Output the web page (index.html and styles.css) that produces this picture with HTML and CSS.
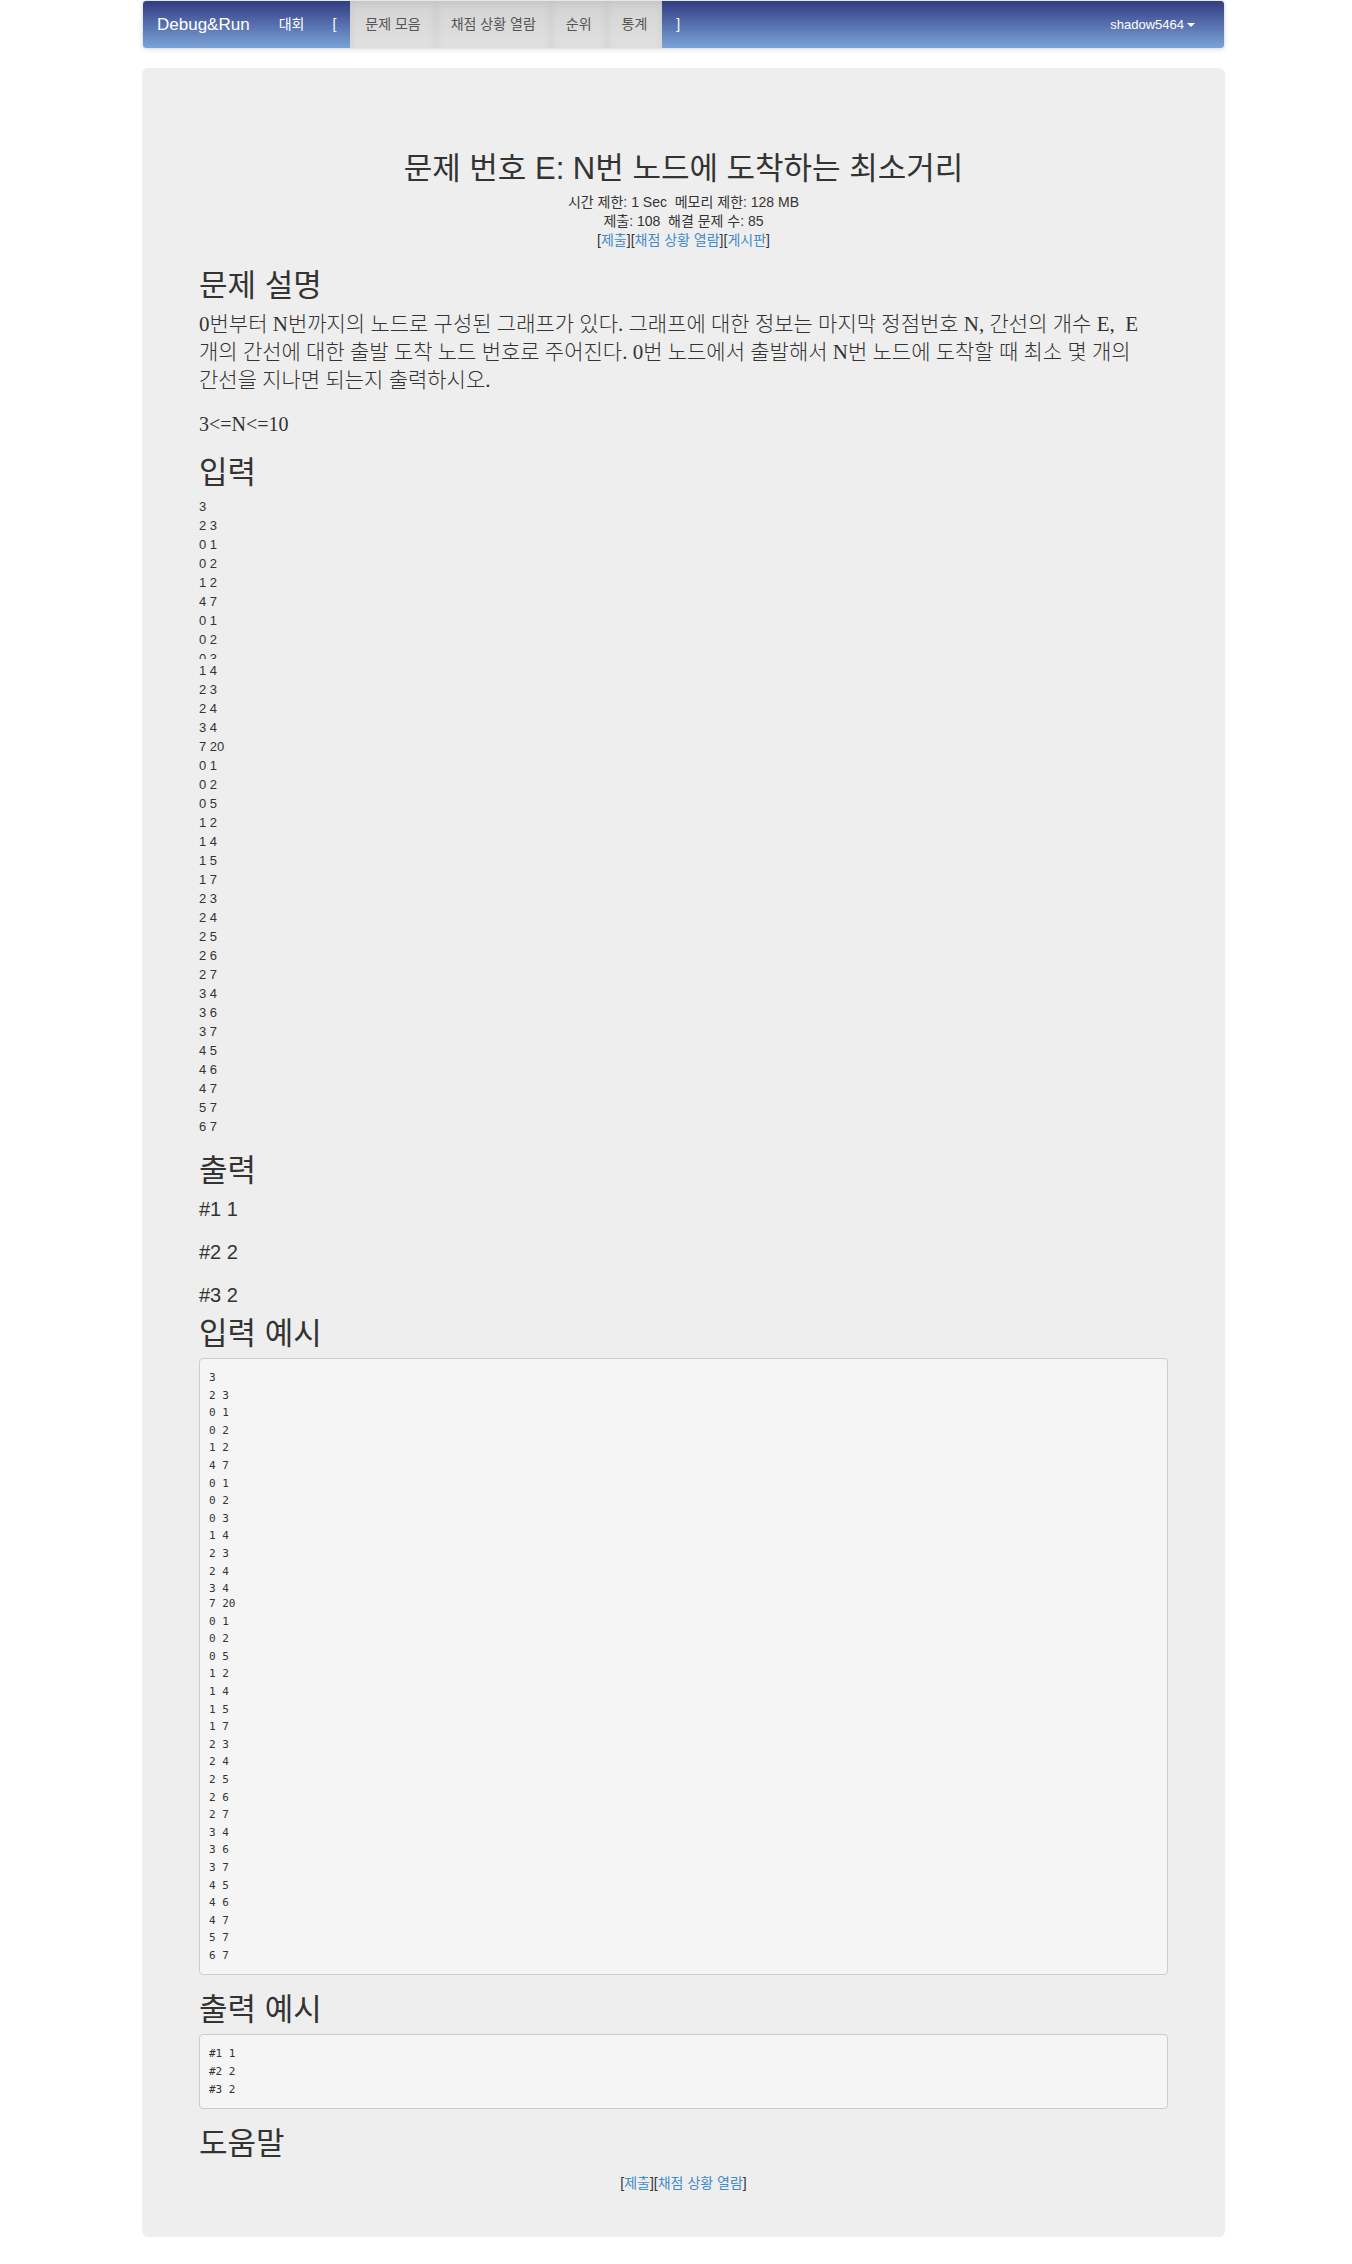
FILE: index.html
```
<!DOCTYPE html>
<html lang="ko">
<head>
<meta charset="utf-8">
<title>문제 번호 E: N번 노드에 도착하는 최소거리</title>
<link rel="stylesheet" href="styles.css">
</head>
<body>
<div class="container">
<nav class="navbar">
<a class="brand" href="#">Debug&amp;Run</a>
<ul class="menu">
<li><a href="#">대회</a></li>
<li><a href="#">[</a></li>
<li class="active"><a href="#">문제 모음</a></li>
<li class="active"><a href="#">채점 상황 열람</a></li>
<li class="active"><a href="#">순위</a></li>
<li class="active"><a href="#">통계</a></li>
<li><a href="#">]</a></li>
</ul>
<button class="user" type="button">shadow5464<span class="caret"></span></button>
</nav>
<main class="problem">
<header class="problem-head">
<h2 class="title">문제 번호 E: N번 노드에 도착하는 최소거리</h2>
<div>시간 제한: 1 Sec&nbsp; 메모리 제한: 128 MB</div>
<div>제출: 108&nbsp; 해결 문제 수: 85</div>
<div>[<a href="#">제출</a>][<a href="#">채점 상황 열람</a>][<a href="#">게시판</a>]</div>
</header>
<section>
<h2>문제 설명</h2>
<div class="description">
<p class="statement">0번부터 N번까지의 노드로 구성된 그래프가 있다. 그래프에 대한 정보는 마지막 정점번호 N, 간선의 개수 E,&nbsp; E<br>개의 간선에 대한 출발 도착 노드 번호로 주어진다. 0번 노드에서 출발해서 N번 노드에 도착할 때 최소 몇 개의<br>간선을 지나면 되는지 출력하시오.</p>
<p>3&lt;=N&lt;=10</p>
</div>
</section>
<section>
<h2>입력</h2>
<div class="lines lines-first">3
2 3
0 1
0 2
1 2
4 7
0 1
0 2
0 3</div>
<div class="lines">1 4
2 3
2 4
3 4
7 20
0 1
0 2
0 5
1 2
1 4
1 5
1 7
2 3
2 4
2 5
2 6
2 7
3 4
3 6
3 7
4 5
4 6
4 7
5 7
6 7</div>
</section>
<section>
<h2>출력</h2>
<div class="answers">
<p>#1 1</p>
<p>#2 2</p>
<p>#3 2</p>
</div>
</section>
<section>
<h2 class="sample-title">입력 예시</h2>
<div class="sample">
<pre class="sample-first">3
2 3
0 1
0 2
1 2
4 7
0 1
0 2
0 3
1 4
2 3
2 4
3 4</pre>
<pre>7 20
0 1
0 2
0 5
1 2
1 4
1 5
1 7
2 3
2 4
2 5
2 6
2 7
3 4
3 6
3 7
4 5
4 6
4 7
5 7
6 7</pre>
</div>
</section>
<section>
<h2>출력 예시</h2>
<div class="sample">
<pre>#1 1
#2 2
#3 2</pre>
</div>
</section>
<section>
<h2>도움말</h2>
</section>
<footer class="problem-foot">[<a href="#">제출</a>][<a href="#">채점 상황 열람</a>]</footer>
</main>
</div>
</body>
</html>
```
FILE: styles.css
```
* { box-sizing: border-box; }

body {
  margin: 0;
  background: #fff;
  color: #333;
  font: 13px/19px "Liberation Sans", "Noto Sans CJK KR", sans-serif;
}

a { color: #428bca; text-decoration: none; }
p, pre { margin: 0; }

.container { margin: 0 127px 27px 142px; }

/* Top bar */
.navbar {
  display: flex;
  height: 49px;
  margin-bottom: 19px;
  border: 1px solid #e7e7e7;
  border-radius: 4px;
  background: linear-gradient(#323c82, #7ba3d8);
  box-shadow: 0 1px 5px rgba(0, 0, 0, .1);
}
.brand {
  padding: 14px 15px 14px 14px;
  color: #fff;
  font-size: 17px;
}
.menu {
  display: flex;
  margin: 0;
  padding: 0;
  font-size: 14px;
  list-style: none;
}
.menu a {
  display: block;
  height: 47px;
  padding: 14px;
  color: #fff;
}
.menu .active a {
  padding: 14px 15px;
  color: #555;
  background: linear-gradient(#d3d3d3, #e1e1e1);
  box-shadow: inset 0 3px 9px rgba(0, 0, 0, .075);
}
.user {
  display: flex;
  align-items: center;
  gap: 3px;
  margin-left: auto;
  padding: 0 29px 0 15px;
  border: 0;
  background: none;
  color: #fff;
  font: inherit;
}
.caret {
  border: 4px solid transparent;
  border-top-color: #fff;
  border-bottom: 0;
}

/* Problem statement */
.problem {
  padding: 84px 57px 44px;
  border-radius: 6px;
  background: #eee;
}
.problem-head, .problem-foot {
  font-size: 14px;
  text-align: center;
}
.problem-head { padding-bottom: 1px; }
.problem-foot { margin-top: 14px; }

h2 {
  margin: 18px 0 8px;
  font-size: 31px;
  font-weight: 400;
  line-height: 33px;
}
.title { margin-top: 0; }

.description {
  font: 300 20px/28px "Liberation Serif", "Noto Sans CJK KR", serif;
  white-space: nowrap;
}
.description p + p { margin-top: 16px; }
.description .statement { font-size: 21px; }

.lines { white-space: pre; }
.lines-first {
  height: 162px;
  margin-bottom: 2px;
  overflow: hidden;
}

.answers { font-size: 20px; line-height: 28px; }
.answers p + p { margin-top: 15px; }
.sample-title { margin-top: 8px; }

.sample {
  padding: 10px 9px;
  border: 1px solid #ccc;
  border-radius: 4px;
  background: #f5f5f5;
}
.sample pre {
  font-family: "DejaVu Sans Mono", monospace;
  font-size: 11px;
  line-height: 1.6;
}
.sample .sample-first { height: 226px; }
```
